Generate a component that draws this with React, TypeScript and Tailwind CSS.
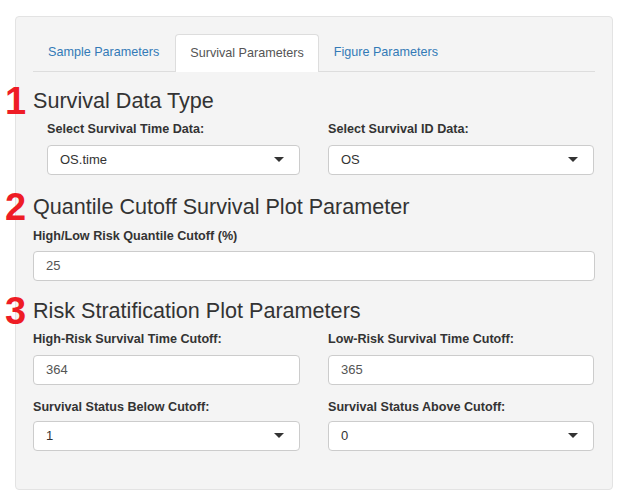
import React from "react";

function Caret() {
  return (
    <svg width="10" height="6" viewBox="0 0 10 6" className="shrink-0">
      <polygon points="0,0 10,0 5,5" fill="#333" />
    </svg>
  );
}

function SelectBox({ value }: { value: string }) {
  return (
    <div className="flex h-[30px] items-center justify-between rounded-[4px] border border-[#ccc] bg-white pl-3 pr-[15px] text-[13px] text-[#333]">
      <span>{value}</span>
      <Caret />
    </div>
  );
}

function TextBox({ value }: { value: string }) {
  return (
    <div className="flex h-[30px] items-center rounded-[4px] border border-[#ccc] bg-white px-3 text-[13px] text-[#555]">
      {value}
    </div>
  );
}

function Label({ children }: { children: React.ReactNode }) {
  return <div className="h-5 text-[12.6px] font-bold leading-5 text-[#333]">{children}</div>;
}

function Heading({ num, children, className }: { num: string; children: React.ReactNode; className?: string }) {
  return (
    <div className={"relative h-6 text-[21.6px] leading-6 text-[#333] " + (className ?? "")}>
      <span className="absolute left-[-28px] top-[-7px] text-[38px] font-bold leading-[38px] text-[#ee1c25]">{num}</span>
      {children}
    </div>
  );
}

export default function App() {
  return (
    <div className="min-h-[502px] w-[626px] bg-white pl-[15px] pt-4" style={{ fontFamily: '"Liberation Sans", Arial, sans-serif' }}>
      <div className="h-[474px] w-[598px] rounded-[4px] border border-[#e3e3e3] bg-[#f4f4f4] px-[17px] pt-[17px]">
        {/* tabs */}
        <div className="flex h-[38px] items-end border-b border-[#ddd] text-[12.6px]">
          <div className="mr-[1px] flex h-[37px] items-center px-[15px] text-[#337ab7]">Sample Parameters</div>
          <div className="-mb-px flex h-[38px] items-center rounded-t-[4px] border border-b-0 border-[#ddd] bg-white px-[14px] pb-px text-[#555]">
            Survival Parameters
          </div>
          <div className="flex h-[37px] items-center px-[15px] text-[#337ab7]">Figure Parameters</div>
        </div>

        <Heading num="1" className="mt-[17px]">Survival Data Type</Heading>
        <div className="mt-[6px] grid grid-cols-[267px_266px] gap-x-[28px]">
          <div className="pl-[14px]">
            <Label>Select Survival Time Data:</Label>
            <div className="mt-[6px]">
              <SelectBox value="OS.time" />
            </div>
          </div>
          <div>
            <Label>Select Survival ID Data:</Label>
            <div className="mt-[6px]">
              <SelectBox value="OS" />
            </div>
          </div>
        </div>

        <Heading num="2" className="mt-[20px]">Quantile Cutoff Survival Plot Parameter</Heading>
        <div className="mt-[7px]">
          <Label>High/Low Risk Quantile Cutoff (%)</Label>
          <div className="mt-[5px]">
            <TextBox value="25" />
          </div>
        </div>

        <Heading num="3" className="mt-[18px]">Risk Stratification Plot Parameters</Heading>
        <div className="mt-[6px] grid grid-cols-[267px_266px] gap-x-[28px]">
          <div>
            <Label>High-Risk Survival Time Cutoff:</Label>
            <div className="mt-[6px]">
              <TextBox value="364" />
            </div>
            <div className="mt-[12px]">
              <Label>Survival Status Below Cutoff:</Label>
            </div>
            <div className="mt-[4px]">
              <SelectBox value="1" />
            </div>
          </div>
          <div>
            <Label>Low-Risk Survival Time Cutoff:</Label>
            <div className="mt-[6px]">
              <TextBox value="365" />
            </div>
            <div className="mt-[12px]">
              <Label>Survival Status Above Cutoff:</Label>
            </div>
            <div className="mt-[4px]">
              <SelectBox value="0" />
            </div>
          </div>
        </div>
      </div>
    </div>
  );
}
